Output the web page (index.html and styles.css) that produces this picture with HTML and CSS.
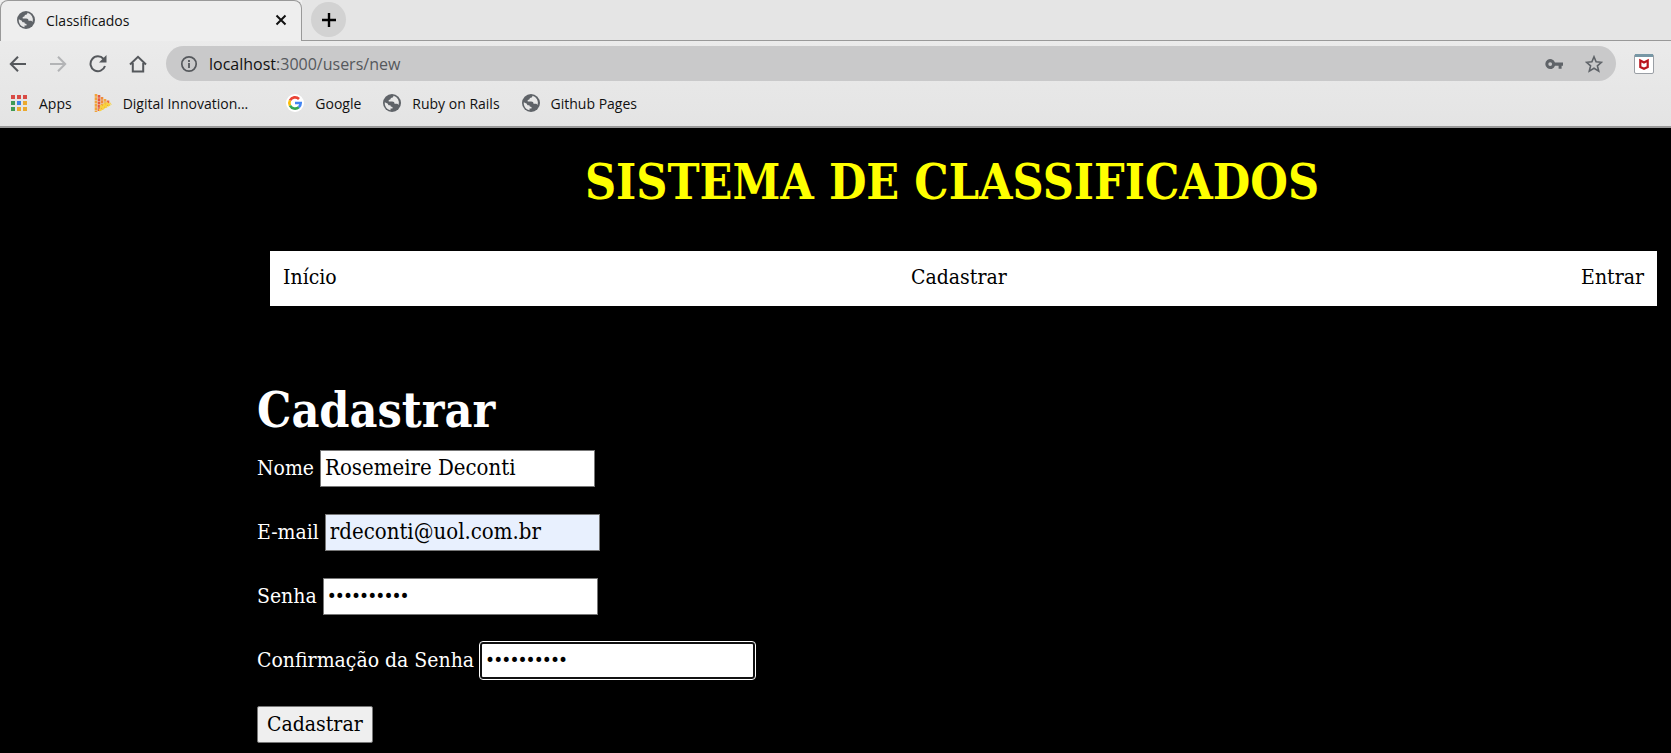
FILE: index.html
```html
<!DOCTYPE html>
<html lang="pt-BR">
<head>
<meta charset="utf-8">
<title>Classificados</title>
<link rel="stylesheet" href="styles.css">
</head>
<body>
<svg class="defs" aria-hidden="true">
  <symbol id="globe" viewBox="0 0 18 18"><circle cx="9" cy="9" r="9" fill="#5f6368"/><path d="M10.5 1.8c-.2 1.5-1 2.2-2.6 2.2-.2 1.4-.8 1.8-2.2 1.9v1.7h3.5c1.5 0 2.3.8 2.3 2.1h1.8c1.1 0 1.8.5 2.3 1.2a7.2 7.2 0 0 0-5.1-9.1zM1.8 8.2c-.4 4 2.1 7.3 5.7 8v-1.7h2v-1.6c-1.5 0-2.1-.6-2.1-1.7H6.300c-.9 0-1.400-.7-1.400-1.500z" fill="#e8e8e8"/></symbol>
</svg>
<header class="browser">
  <div class="tabs">
    <div class="tab">
      <svg class="icon"><use href="#globe"/></svg>
      <span class="tab-title">Classificados</span>
      <button class="plain" aria-label="Fechar"><svg width="12" height="12" viewBox="0 0 12 12"><path d="M1.500 1.500l9 9m0-9l-9 9" stroke="#111" stroke-width="2"/></svg></button>
    </div>
    <div class="tab-rest">
      <button class="plain new-tab" aria-label="Nova guia"><svg width="16" height="16" viewBox="0 0 16 16"><path d="M8 1v14M1 8h14" stroke="#000" stroke-width="2.400"/></svg></button>
    </div>
  </div>
  <div class="toolbar">
    <button class="plain" aria-label="Voltar"><svg width="18" height="18" viewBox="0 0 18 18" fill="none" stroke="#55585c" stroke-width="2"><path d="M17 9H2M9 1.800L1.800 9 9 16.200"/></svg></button>
    <button class="plain" aria-label="Avançar"><svg width="18" height="18" viewBox="0 0 18 18" fill="none" stroke="#b3b4b6" stroke-width="2"><path d="M1 9h15M9 1.800L16.200 9 9 16.200"/></svg></button>
    <button class="plain" aria-label="Recarregar"><svg width="18" height="18" viewBox="0 0 18 18"><path d="M16 11A7.400 7.400 0 1 1 14.600 4" fill="none" stroke="#55585c" stroke-width="2"/><path d="M17.500 0v7.500H10z" fill="#55585c"/></svg></button>
    <button class="plain" aria-label="Início"><svg width="18" height="18" viewBox="0 0 18 18"><path d="M1 9.500L9 1.800l8 7.700M3.800 8v8.500h10.400V8" fill="none" stroke="#55585c" stroke-width="2"/></svg></button>
    <div class="address">
      <svg width="18" height="18" viewBox="0 0 18 18"><circle cx="9" cy="9" r="7.200" fill="none" stroke="#55585c" stroke-width="1.700"/><path d="M9 8v5M9 5v1.900" stroke="#55585c" stroke-width="1.800"/></svg>
      <span class="url">localhost<span class="path">:3000/users/new</span></span>
      <button class="plain" aria-label="Senhas"><svg width="18" height="18" viewBox="0 0 18 18"><path d="M10 7.400a5 5 0 1 0 0 3.400h3.600v3h3v-3H18V7.400zM5.200 7.200a1.900 1.900 0 1 1 0 3.800 1.900 1.900 0 0 1 0-3.800z" fill="#5f6368" fill-rule="evenodd"/></svg></button>
      <button class="plain" aria-label="Favorito"><svg width="18" height="18" viewBox="0 0 18 18"><path d="M9 1.800l2.100 5 5.400.5-4.100 3.500 1.300 5.300L9 13.300l-4.700 2.800 1.300-5.300-4.100-3.500 5.400-.5z" fill="none" stroke="#5f6368" stroke-width="1.600"/></svg></button>
    </div>
    <button class="plain" aria-label="McAfee"><svg width="20" height="20" viewBox="0 0 20 20"><rect x=".5" y=".5" width="19" height="19" rx="1.500" fill="#fff" stroke="#9a9fa5"/><path d="M1 0h18v3H1z" fill="#7797a5"/><path d="M6.300 6.500L10 8.500l3.700-2v6.500L10 14.800 6.300 13z" fill="none" stroke="#b9141c" stroke-width="2.200"/></svg></button>
  </div>
  <nav class="bookmarks">
    <a href="#"><svg class="icon" viewBox="0 0 18 18"><path d="M1 1h4v4H1zM7 1h4v4H7zM13 1h4v4h-4z" fill="#d94b45"/><path d="M1 7h4v4H1zM1 13h4v4H1z" fill="#3f9b55"/><path d="M7 7h4v4H7z" fill="#3b82e8"/><path d="M13 7h4v4h-4zM7 13h4v4H7zM13 13h4v4h-4z" fill="#eba92f"/></svg>Apps</a>
    <a href="#"><svg class="icon" viewBox="0 0 18 18" fill="none" stroke-width="2.600" stroke-dasharray="2.800 .5"><path d="M2 0v18" stroke="#f2a33a"/><path d="M5 1v16" stroke="#e8583d"/><path d="M8 3v12.500" stroke="#ef8a3a"/><path d="M11 5v9" stroke="#f4a63a"/><path d="M14 6.500v5.500" stroke="#ec6a3c"/><path d="M5 16.500l12-7M6 13l8-4" stroke="#f8d23c"/></svg>Digital Innovation...</a>
    <a href="#" class="google"><svg class="icon" viewBox="0 0 18 18"><circle cx="9" cy="9" r="9" fill="#fff"/><g fill="none" stroke-width="2.600"><path d="M4 6.300A5.700 5.700 0 0 1 13 5" stroke="#ea4335"/><path d="M4 11.700a5.700 5.700 0 0 1 0-5.400" stroke="#fbbc05"/><path d="M12.800 13.200A5.700 5.700 0 0 1 4 11.700" stroke="#34a853"/><path d="M9 9h5.700a5.700 5.700 0 0 1-1.900 4.200" stroke="#4285f4"/></g></svg>Google</a>
    <a href="#"><svg class="icon"><use href="#globe"/></svg>Ruby on Rails</a>
    <a href="#"><svg class="icon"><use href="#globe"/></svg>Github Pages</a>
  </nav>
</header>
<main class="page">
  <h1 class="site-title">SISTEMA DE CLASSIFICADOS</h1>
  <nav class="menu"><a href="#">Início</a><a href="#">Cadastrar</a><a href="#">Entrar</a></nav>
  <h2 class="heading">Cadastrar</h2>
  <form class="form">
    <div class="field"><label for="name">Nome</label><input id="name" type="text" value="Rosemeire Deconti"></div>
    <div class="field"><label for="email">E-mail</label><input id="email" class="autofilled" type="email" value="rdeconti@uol.com.br"></div>
    <div class="field"><label for="password">Senha</label><input id="password" type="password" value="abcdefghij"></div>
    <div class="field"><label for="confirm">Confirmação da Senha</label><input id="confirm" class="current" type="password" value="abcdefghij"></div>
    <button class="submit" type="submit">Cadastrar</button>
  </form>
</main>
</body>
</html>
```
FILE: styles.css
```css
* { box-sizing: border-box; }
body {
  margin: 0;
  min-height: 100vh;
  background: #000;
  font-family: "DejaVu Serif Condensed", "DejaVu Serif", serif;
  font-size: 21px;
}
a { color: inherit; text-decoration: none; }
svg { display: block; flex: none; }
.defs { display: none; }
.icon { width: 18px; height: 18px; }
.plain { display: flex; padding: 0; border: 0; background: none; }

.browser {
  background: linear-gradient(#eeeeee, #e4e4e4);
  border-bottom: 2px solid #999;
  font-family: "Open Sans", "Noto Sans", sans-serif;
  font-size: 14px;
  color: #111;
}
.tabs { display: flex; height: 41px; }
.tab {
  display: flex;
  align-items: center;
  width: 302px;
  padding: 0 14px 2px 16px;
  gap: 11px;
  border: 1px solid #999;
  border-bottom: 0;
  border-radius: 8px 8px 0 0;
  background: #eee;
}
.tab-title { flex: 1; }
.tab-rest {
  flex: 1;
  padding: 2px 9px;
  border-bottom: 1px solid #999;
  background: #e5e5e5;
}
.new-tab {
  align-items: center;
  justify-content: center;
  width: 35px;
  height: 35px;
  border-radius: 50%;
  background: #d2d2d2;
}
.toolbar {
  display: flex;
  align-items: center;
  gap: 22px;
  padding: 5px 17px 5px 9px;
}
.address {
  flex: 1;
  display: flex;
  align-items: center;
  gap: 22px;
  height: 35px;
  margin: 0 -4px 0 -3px;
  padding: 0 13px 0 14px;
  border-radius: 18px;
  background: #c9c9ca;
  font-size: 16px;
}
.url { flex: 1; margin-left: -11px; }
.path { color: #55585c; }
.bookmarks {
  display: flex;
  gap: 22px;
  height: 40px;
  padding: 0 10px 6px;
  align-items: center;
}
.bookmarks a { display: flex; align-items: center; gap: 11px; }
.google { margin-left: 16px; }

.page { padding: 16px 0 9px 257px; color: #fff; }
.site-title, .heading { margin: 0; font-size: 48px; line-height: 76px; }
.site-title { padding-right: 24px; text-align: center; color: #ff0; }
.menu {
  display: flex;
  justify-content: space-between;
  height: 55px;
  margin: 31px 14px 66px 13px;
  padding: 0 13px;
  background: #fff;
  color: #000;
  line-height: 53px;
}
.form { display: grid; gap: 27px; justify-items: start; }
.heading { margin-bottom: 2px; }
.field { display: flex; align-items: center; gap: 6px; height: 37px; }
.field input {
  width: 275px;
  height: 37px;
  padding: 0 4px 2px;
  border: 1px solid #777;
  background: #fff;
  color: #000;
  font: inherit;
  font-size: 22px;
}
.field label { padding-bottom: 2px; }
.field .autofilled { background: #e8f0fe; }
.field input[type="password"] { font-family: Roboto, sans-serif; font-size: 24px; }
.field .current {
  border: 2px solid #111;
  border-radius: 3px;
  outline: 1px solid #fff;
}
.submit {
  height: 37px;
  padding: 0 9px 2px;
  border: 1px solid #777;
  border-radius: 2px;
  background: #efefef;
  color: #000;
  font: inherit;
}
```
